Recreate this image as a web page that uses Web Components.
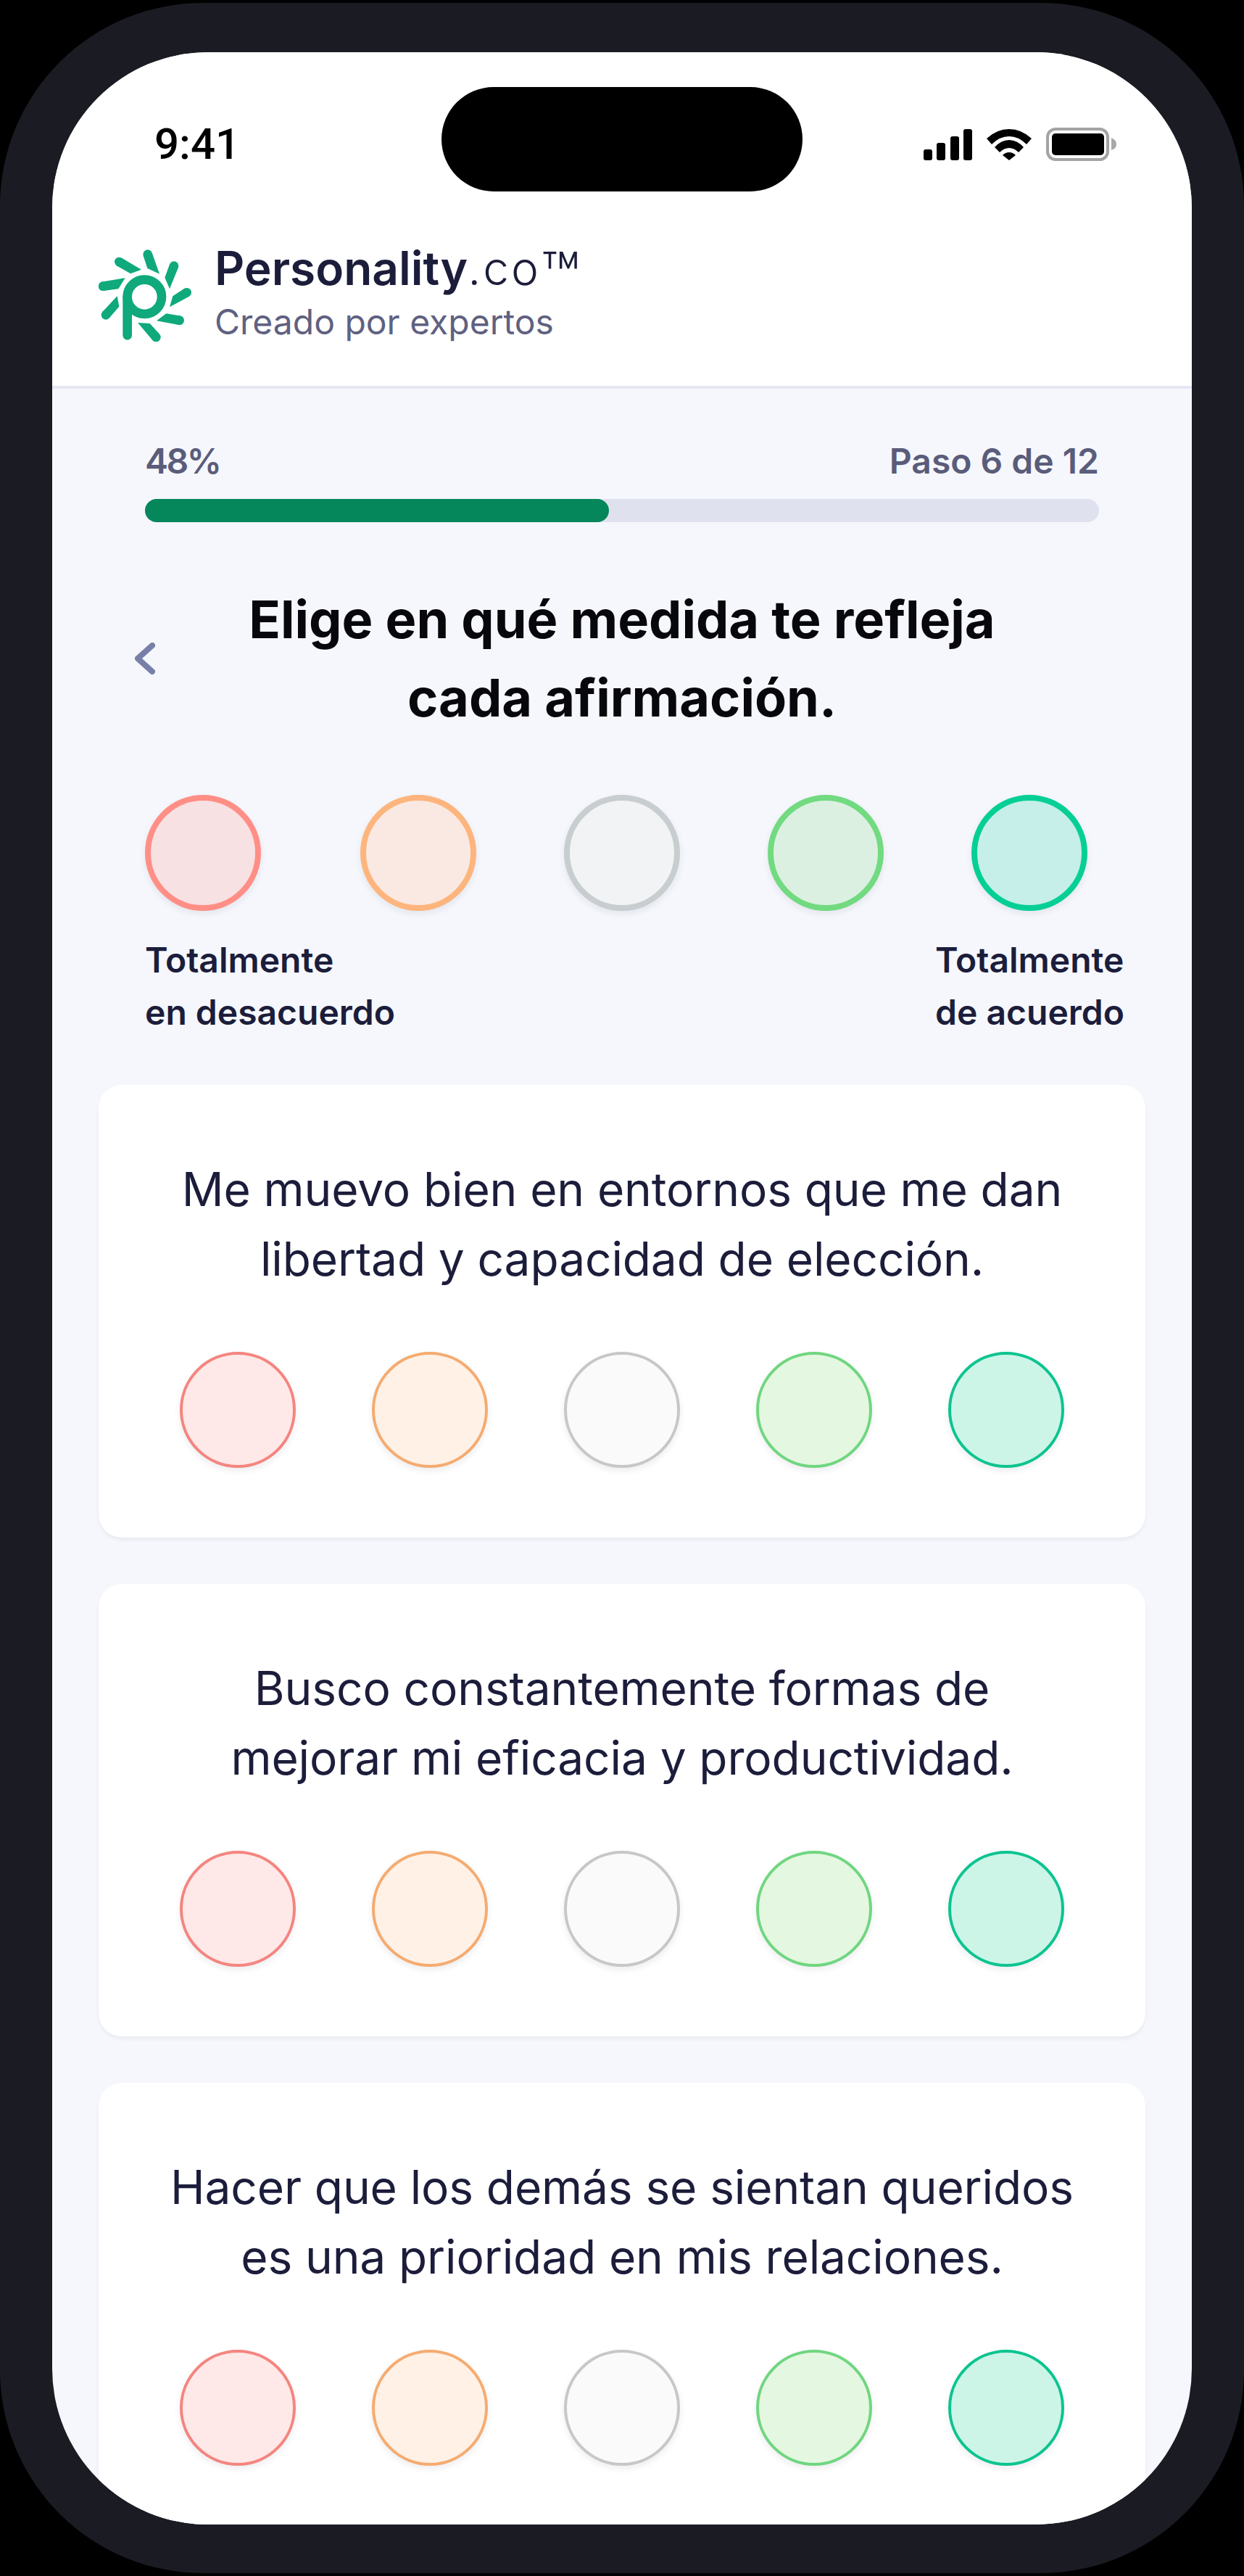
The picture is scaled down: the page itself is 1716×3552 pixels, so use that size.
<!DOCTYPE html>
<html lang="es">
<head>
<meta charset="utf-8">
<title>Personality.co</title>
<style>
  html, body { margin: 0; background: #000; }
  body { font-family: Inter, "Liberation Sans", sans-serif; }
</style>
</head>
<body>
<phone-frame>
  <status-bar></status-bar>
  <brand-header></brand-header>
  <quiz-progress percent="48" step="Paso 6 de 12"></quiz-progress>
  <quiz-heading>Elige en qué medida te refleja<br>cada afirmación.</quiz-heading>
  <likert-legend></likert-legend>
  <statement-card>Me muevo bien en entornos que me dan<br>libertad y capacidad de elección.</statement-card>
  <statement-card>Busco constantemente formas de<br>mejorar mi eficacia y productividad.</statement-card>
  <statement-card>Hacer que los demás se sientan queridos<br>es una prioridad en mis relaciones.</statement-card>
</phone-frame>

<script>
class PhoneFrame extends HTMLElement {
  constructor() {
    super();
    this.attachShadow({ mode: 'open' });
    this.shadowRoot.innerHTML = `
      <style>
        :host { display: block; box-sizing: border-box; width: 1716px; height: 3544px; margin-top: 4px;
                padding: 68px 72px 67px; background: #1b1c23; border-radius: 280px; }
        .screen { position: relative; height: 100%; overflow: hidden; background: #f5f7fc; border-radius: 215px; }
        .island { position: absolute; left: 537px; top: 48px; width: 498px; height: 144px; border-radius: 72px; background: #000; }
      </style>
      <div class="screen">
        <slot></slot>
        <div class="island"></div>
      </div>`;
  }
}

class StatusBar extends HTMLElement {
  constructor() {
    super();
    this.attachShadow({ mode: 'open' });
    this.shadowRoot.innerHTML = `
      <style>
        :host { display: flex; align-items: center; justify-content: space-between; box-sizing: border-box;
                height: 254px; padding: 0 104px 0 141px; background: #fff; color: #000; }
        .time { font: 500 60px/1 Roboto, sans-serif; }
        .icons { display: flex; align-items: center; gap: 20px; }
        svg { display: block; }
      </style>
      <span class="time">9:41</span>
      <div class="icons">
        <svg width="67" height="43" viewBox="0 0 67 43" fill="#000">
          <rect x="0" y="28" width="12" height="15" rx="3"/>
          <rect x="18" y="19" width="12" height="24" rx="3"/>
          <rect x="37" y="10" width="12" height="33" rx="3"/>
          <rect x="55" y="0" width="12" height="43" rx="3"/>
        </svg>
        <svg width="62" height="43" viewBox="0 0 62 43" fill="#000">
          <path d="M0 13Q14 0 31 0T62 13L55 21Q44 10 31 10T7 21Z"/>
          <path d="M11 25Q20 15 31 15T51 25L44 32Q38 26 31 26T18 32Z"/>
          <path d="M22 36Q26 32 31 32T40 36L31 43Z"/>
        </svg>
        <svg width="97" height="46" viewBox="0 0 97 46">
          <rect x="2" y="2" width="83" height="42" rx="11" fill="none" stroke="#a3a3a3" stroke-width="4"/>
          <rect x="8" y="8" width="72" height="30" rx="5" fill="#000"/>
          <path d="M90 14Q97 17 97 23T90 31Z" fill="#a9a9a9"/>
        </svg>
      </div>`;
  }
}

class BrandHeader extends HTMLElement {
  // rays of the sun: two inner corners, then the centre of the rounded outer end
  static rays = [
    [280, 150, 330, 173, 281, 92],
    [352, 188, 372, 235, 390, 140],
    [385, 265, 372, 310, 443, 250],
    [358, 337, 318, 367, 413, 365],
    [290, 378, 240, 375, 316, 435],
    [155, 265, 163, 308, 108, 343],
    [188, 190, 160, 235, 96, 224],
    [255, 155, 210, 172, 163, 123]
  ];

  constructor() {
    super();
    this.attachShadow({ mode: 'open' });
    this.shadowRoot.innerHTML = `
      <style>
        :host { display: flex; align-items: center; gap: 32px; padding: 8px 0 50px 64px; background: #fff;
                border-bottom: 4px solid #e6e6f2; }
        svg { display: block; flex: none; }
        .title { font: 600 64px/72px Inter, sans-serif; color: #1c1d3b; }
        .title span { font-weight: 300; letter-spacing: 3px; }
        .title sup { font-size: 90px; font-weight: 300; line-height: 0; vertical-align: -19px; }
        .sub { font: 400 48px/76px Inter, sans-serif; color: #5f6180; }
      </style>
      <svg width="128" height="128" viewBox="78 72 384 384" fill="#0fa97c">
        ${BrandHeader.rays.map(r => this.ray(r)).join('')}
        <circle cx="268" cy="268" r="71" fill="none" stroke="#0fa97c" stroke-width="38"/>
        <path d="M197 268V427" fill="none" stroke="#0fa97c" stroke-width="38" stroke-linecap="round"/>
      </svg>
      <div>
        <div class="title">Personality<span>.co</span><sup>™</sup></div>
        <div class="sub">Creado por expertos</div>
      </div>`;
  }

  ray([ax, ay, bx, by, cx, cy]) {
    const mx = (ax + bx) / 2, my = (ay + by) / 2;
    const len = Math.hypot(cx - mx, cy - my);
    const nx = -(cy - my) / len * 19, ny = (cx - mx) / len * 19;
    const pts = `${ax},${ay} ${bx},${by} ${cx + nx},${cy + ny} ${cx - nx},${cy - ny}`;
    const flip = (bx - ax) * nx + (by - ay) * ny < 0;
    const poly = flip ? `${ax},${ay} ${bx},${by} ${cx - nx},${cy - ny} ${cx + nx},${cy + ny}` : pts;
    return `<polygon points="${poly}"/><circle cx="${cx}" cy="${cy}" r="19"/>`;
  }
}

class QuizProgress extends HTMLElement {
  constructor() {
    super();
    this.attachShadow({ mode: 'open' });
    const percent = this.getAttribute('percent');
    this.shadowRoot.innerHTML = `
      <style>
        :host { display: block; padding: 64px 128px 0; font: 600 48px/72px Inter, sans-serif; color: #5a5c7a; }
        .labels { display: flex; justify-content: space-between; }
        .pct { letter-spacing: -2.5px; }
        .track { height: 32px; margin-top: 16px; border-radius: 16px; background: #dfe2ee; }
        .fill { height: 100%; width: 48.6%; border-radius: 16px; background: #05865b; }
      </style>
      <div class="labels"><span class="pct">${percent}%</span><span>${this.getAttribute('step')}</span></div>
      <div class="track"><div class="fill"></div></div>`;
  }
}

class QuizHeading extends HTMLElement {
  constructor() {
    super();
    this.attachShadow({ mode: 'open' });
    this.shadowRoot.innerHTML = `
      <style>
        :host { display: grid; grid-template-columns: 1fr auto 1fr; align-items: center; padding: 80px 114px 0; }
        svg { display: block; }
        h1 { margin: 0; font: 700 72px/108px Inter, sans-serif; text-align: center; color: #08080c; }
      </style>
      <svg width="28" height="44" viewBox="0 0 28 44">
        <path d="M24 4L4 22L24 40" fill="none" stroke="#7880a8" stroke-width="8" stroke-linecap="round" stroke-linejoin="round"/>
      </svg>
      <h1><slot></slot></h1>`;
  }
}

class LikertDot extends HTMLElement {
  static tones = {
    red:    ['#f4857f', '#ffe8e8', '#ff8f86', '#f7e1e3'],
    orange: ['#f5ab70', '#fff1e6', '#fdb57d', '#f9e9e2'],
    grey:   ['#c6c8c8', '#fafafa', '#c8cdcf', '#f1f3f5'],
    green:  ['#70d680', '#e4f7e0', '#72da80', '#dcf0e2'],
    teal:   ['#0cc48f', '#ccf5e8', '#06cf96', '#c5efe8']
  };

  constructor() {
    super();
    this.attachShadow({ mode: 'open' });
    const t = LikertDot.tones[this.getAttribute('tone')];
    const big = this.hasAttribute('legend');
    this.shadowRoot.innerHTML = `
      <style>
        :host { display: block; flex: none; box-sizing: border-box; width: 160px; height: 160px; border-radius: 50%;
                border: ${big ? 8 : 4}px solid ${big ? t[2] : t[0]}; background: ${big ? t[3] : t[1]};
                box-shadow: 0 4px 10px rgba(30, 30, 60, .08); }
      </style>`;
  }
}

class LikertLegend extends HTMLElement {
  constructor() {
    super();
    this.attachShadow({ mode: 'open' });
    this.shadowRoot.innerHTML = `
      <style>
        :host { display: block; padding: 80px 93px 64px 128px; }
        .dots { display: flex; }
        .dots likert-dot + likert-dot { margin-left: 121px; }
        .dots likert-dot:nth-child(2) { margin-left: 137px; }
        .labels { display: flex; justify-content: space-between; margin-top: 32px;
                  font: 600 48px/72px Inter, sans-serif; color: #1c1d3b; }
      </style>
      <div class="dots">
        <likert-dot legend tone="red"></likert-dot>
        <likert-dot legend tone="orange"></likert-dot>
        <likert-dot legend tone="grey"></likert-dot>
        <likert-dot legend tone="green"></likert-dot>
        <likert-dot legend tone="teal"></likert-dot>
      </div>
      <div class="labels">
        <span>Totalmente<br>en desacuerdo</span>
        <span>Totalmente<br>de acuerdo</span>
      </div>`;
  }
}

class StatementCard extends HTMLElement {
  constructor() {
    super();
    this.attachShadow({ mode: 'open' });
    this.shadowRoot.innerHTML = `
      <style>
        :host { display: block; box-sizing: border-box; margin: 0 64px 64px; padding: 96px 0; background: #fff;
                border-radius: 32px; box-shadow: 0 4px 4px rgba(30, 30, 60, .05); }
        p { margin: 0 0 80px; font: 400 64px/96px Inter, sans-serif; letter-spacing: -.12px; text-align: center; color: #1c1d3b; }
        .dots { display: flex; justify-content: space-between; padding: 0 112px; }
      </style>
      <p><slot></slot></p>
      <div class="dots">
        <likert-dot tone="red"></likert-dot>
        <likert-dot tone="orange"></likert-dot>
        <likert-dot tone="grey"></likert-dot>
        <likert-dot tone="green"></likert-dot>
        <likert-dot tone="teal"></likert-dot>
      </div>`;
  }
}

customElements.define('likert-dot', LikertDot);
customElements.define('phone-frame', PhoneFrame);
customElements.define('status-bar', StatusBar);
customElements.define('brand-header', BrandHeader);
customElements.define('quiz-progress', QuizProgress);
customElements.define('quiz-heading', QuizHeading);
customElements.define('likert-legend', LikertLegend);
customElements.define('statement-card', StatementCard);
</script>
</body>
</html>
